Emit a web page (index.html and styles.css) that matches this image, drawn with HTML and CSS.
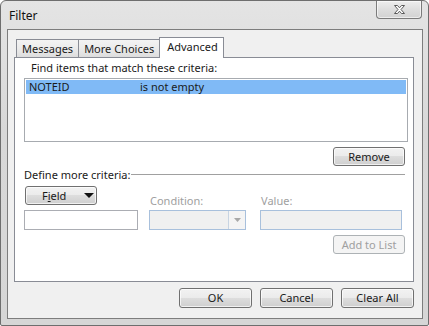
FILE: index.html
```html
<!DOCTYPE html>
<html lang="en">
<head>
    <meta charset="UTF-8">
    <title>Filter</title>
    <link rel="stylesheet" href="styles.css">
</head>
<body>
    <div class="window">
        <div class="titlebar">
            <span class="title">Filter</span>
            <div class="close">
                <svg width="13" height="11" viewBox="0 0 13 11">
                    <path d="M1.5 1.5 H4.5 L6.5 3.8 L8.5 1.5 H11.5 L8 5.5 L11.5 9.5 H8.5 L6.5 7.2 L4.5 9.5 H1.5 L5 5.5 Z" fill="#fff" stroke="#5a5a5a" stroke-width="1"/>
                </svg>
            </div>
        </div>

        <div class="client">
            <div class="tabs">
                <div class="tab">Messages</div>
                <div class="tab">More Choices</div>
                <div class="tab active">Advanced</div>
            </div>

            <div class="panel">
                <div class="caption">Find items that match these criteria:</div>
                <div class="list">
                    <div class="row selected">
                        <span class="col-field">NOTEID</span>
                        <span>is not empty</span>
                    </div>
                </div>
                <div class="right-row">
                    <button class="btn">Remove</button>
                </div>

                <div class="group">
                    <span>Define more criteria:</span>
                    <span class="rule"></span>
                </div>

                <div class="criteria">
                    <button class="btn field-btn">
                        <span class="field-inner">
                            <span class="field-text">F<u>i</u>eld</span>
                            <svg width="10" height="6" viewBox="0 0 10 6"><path d="M0 0 H10 L5 5 Z" fill="#111"/></svg>
                        </span>
                    </button>
                    <span class="label disabled">Condition:</span>
                    <span class="label disabled">Value:</span>

                    <div class="input"></div>
                    <div class="combo">
                        <span class="combo-btn">
                            <svg width="7" height="4" viewBox="0 0 7 4"><path d="M0 0 H7 L3.5 4 Z" fill="#a8a8a8"/></svg>
                        </span>
                    </div>
                    <div class="input off"></div>
                </div>

                <div class="right-row">
                    <button class="btn" disabled>Add to List</button>
                </div>
            </div>

            <div class="footer">
                <button class="btn">OK</button>
                <button class="btn">Cancel</button>
                <button class="btn">Clear All</button>
            </div>
        </div>
    </div>
</body>
</html>
```

FILE: styles.css
```css
body {
    margin: 0;
    font-family: "Noto Sans", "Open Sans", sans-serif;
    font-size: 11px;
    color: #1a1a1a;
    background: #fff;
}

.window {
    width: 429px;
    height: 326px;
    box-sizing: border-box;
    border: 1px solid #6e6e6e;
    border-radius: 6px 6px 2px 2px;
    background: linear-gradient(#e4e4e4, #d8d8d8 40%, #d6d6d6);
    padding: 0 5px 6px 6px;
    display: flex;
    flex-direction: column;
}

.titlebar {
    height: 28px;
    display: flex;
    justify-content: space-between;
    align-items: flex-start;
    flex-shrink: 0;
}

.title {
    margin: 6px 0 0 2px;
    font-size: 12px;
    color: #111;
}

.close {
    width: 46px;
    height: 18px;
    box-sizing: border-box;
    border: 1px solid #7b7b7b;
    border-top: none;
    border-radius: 0 0 4px 4px;
    background: linear-gradient(#eeeeee, #dedede 50%, #d2d2d2);
    box-shadow: inset 0 0 0 1px rgba(255, 255, 255, 0.6);
    display: flex;
    justify-content: center;
    align-items: center;
    margin-right: 1px;
}

.client {
    flex: 1;
    border: 1px solid #7d7d7d;
    background: #f0f0f0;
    padding: 7px 8px 0 6px;
    display: flex;
    flex-direction: column;
}

.tabs {
    display: flex;
    align-items: flex-end;
    height: 20px;
    padding-left: 2px;
}

.tab {
    height: 18px;
    box-sizing: border-box;
    border: 1px solid #898c95;
    border-bottom: none;
    margin-right: -1px;
    padding: 0 5px;
    line-height: 18px;
    background: linear-gradient(#f3f3f3, #ebebeb 50%, #dddddd);
}

.tab.active {
    height: 21px;
    margin-bottom: -1px;
    position: relative;
    z-index: 1;
    background: #fff;
    padding: 0 5px 0 7px;
    line-height: 17px;
}

.panel {
    height: 225px;
    box-sizing: border-box;
    border: 1px solid #898c95;
    background: #fff;
    padding: 2px 5px 0 9px;
}

.caption {
    padding-left: 7px;
    height: 18px;
    line-height: 16px;
}

.list {
    height: 64px;
    box-sizing: border-box;
    border: 1px solid #a7abb0;
    padding: 1px;
}

.row {
    height: 14px;
    line-height: 14px;
    padding-left: 3px;
    display: flex;
}

.row.selected {
    background: #80baf6;
}

.col-field {
    width: 111px;
}

.right-row {
    display: flex;
    justify-content: flex-end;
    padding-right: 3px;
    margin-top: 5px;
}

.btn {
    width: 72px;
    height: 19px;
    box-sizing: border-box;
    border: 1px solid #707070;
    border-radius: 3px;
    background: linear-gradient(#f2f2f2, #ebebeb 49%, #dddddd 50%, #cfcfcf);
    box-shadow: inset 0 0 0 1px rgba(255, 255, 255, 0.7);
    font-family: inherit;
    font-size: 11px;
    color: #1a1a1a;
    padding: 0;
    line-height: 16px;
}

.btn:disabled {
    border-color: #adb2b5;
    background: #f4f4f4;
    box-shadow: none;
    color: #a0a0a0;
}

.group {
    display: flex;
    align-items: center;
    margin-top: 1px;
    height: 14px;
}

.rule {
    flex: 1;
    border-top: 1px solid #a0a0a0;
    margin: 0 3px 0 1px;
}

.criteria {
    display: grid;
    grid-template-columns: 114px 97px 145px;
    column-gap: 11px;
    grid-template-rows: 24px 20px;
    margin-top: 5px;
}

.criteria > :nth-child(3n+3) {
    margin-left: 3px;
}

.field-btn {
    margin-left: 1px;
    height: 19px;
    align-self: start;
}

.field-inner {
    display: flex;
    align-items: center;
    padding-left: 16px;
}

.field-text {
    width: 42px;
    text-align: left;
}

.label {
    align-self: end;
    padding: 0 0 2px 1px;
}

.disabled {
    color: #a0a0a0;
}

.input {
    height: 20px;
    box-sizing: border-box;
    border: 1px solid #abadb3;
    background: #fff;
}

.input.off {
    border-color: #a8c0dc;
    background: #f0f0f0;
}

.combo {
    height: 20px;
    box-sizing: border-box;
    border: 1px solid #a8c0dc;
    background: #f0f0f0;
    display: flex;
    justify-content: flex-end;
}

.combo-btn {
    width: 16px;
    border-left: 1px solid #c8d4e2;
    background: #f4f4f4;
    display: flex;
    justify-content: center;
    align-items: center;
}

.footer {
    display: flex;
    justify-content: flex-end;
    gap: 8px;
    margin-top: 6px;
}

.footer .btn {
    width: 73px;
    height: 20px;
}
```
